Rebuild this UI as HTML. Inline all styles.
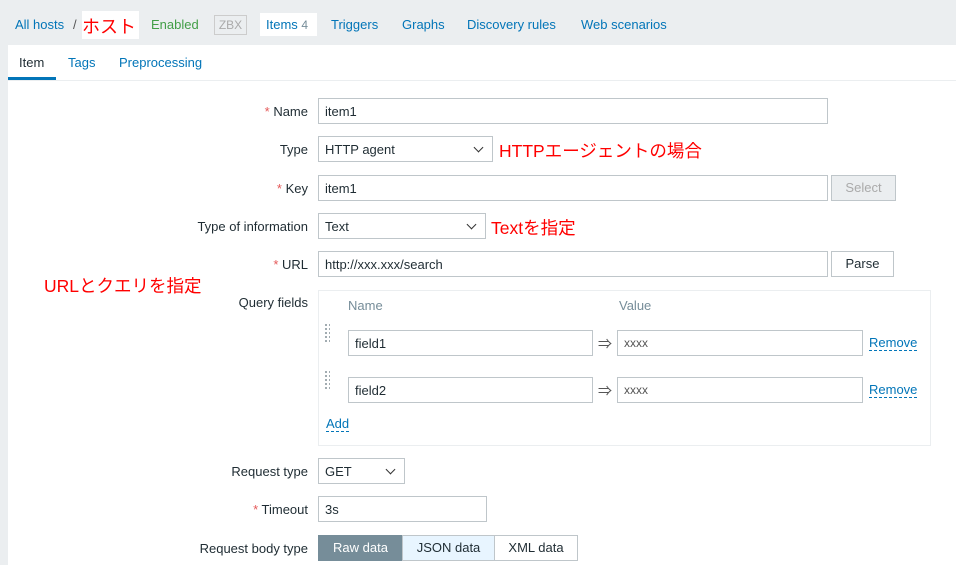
<!DOCTYPE html>
<html><head><meta charset="utf-8"><style>
*{margin:0;padding:0;box-sizing:border-box}
body{width:956px;height:565px;overflow:hidden;background:#ebeef0;font-family:"Liberation Sans","Noto Sans CJK JP",sans-serif;font-size:13px;color:#1f2c33;position:relative}
.a{position:absolute;white-space:nowrap}
.lnk{color:#0275b8}
.panel{position:absolute;left:8px;top:45px;width:948px;height:520px;background:#fff}
.lbl{position:absolute;right:648px;text-align:right;white-space:nowrap}
.req{color:#e45959}
.in{position:absolute;height:26px;border:1px solid #bfc6ca;background:#fff;padding:0 6px;line-height:25px;white-space:nowrap}
.sel::after{content:"";position:absolute;right:10px;top:7px;width:6px;height:6px;border-right:1.5px solid #333;border-bottom:1.5px solid #333;transform:rotate(45deg)}
.btn{position:absolute;height:26px;border:1px solid #bfc6ca;background:#fff;text-align:center;line-height:24px}
.red{color:#ff0000;font-size:17.5px}
.dots{position:absolute;width:6px;height:20px;background-image:radial-gradient(circle,#9aa5ab 1px,transparent 1.2px);background-size:4px 4px}
.rm{color:#0275b8;border-bottom:1px dashed #0275b8;line-height:14px}
.arr{position:absolute;color:#555;font-size:14px}
</style></head><body>
<div class="a lnk" style="left:15px;top:17px">All hosts</div>
<div class="a" style="left:73px;top:17px;color:#555">/</div>
<div class="a" style="left:82px;top:11px;width:57px;height:28px;background:#fff"></div>
<div class="a red" style="left:82px;top:13px;font-size:18px">ホスト</div>
<div class="a" style="left:151px;top:17px;color:#429e47">Enabled</div>
<div class="a" style="left:214px;top:15px;width:33px;height:20px;border:1px solid #ccc;color:#aaa;font-size:12px;text-align:center;line-height:18px">ZBX</div>
<div class="a" style="left:260px;top:13px;width:57px;height:23px;background:#fff"></div>
<div class="a lnk" style="left:266px;top:17px">Items <span style="color:#768d99;font-size:12px">4</span></div>
<div class="a lnk" style="left:331px;top:17px">Triggers</div>
<div class="a lnk" style="left:402px;top:17px">Graphs</div>
<div class="a lnk" style="left:467px;top:17px">Discovery rules</div>
<div class="a lnk" style="left:581px;top:17px">Web scenarios</div>
<div class="panel"></div>
<div class="a" style="left:19px;top:55px">Item</div>
<div class="a lnk" style="left:68px;top:55px">Tags</div>
<div class="a lnk" style="left:119px;top:55px">Preprocessing</div>
<div class="a" style="left:8px;top:77px;width:48px;height:3px;background:#0275b8"></div>
<div class="a" style="left:8px;top:80px;width:948px;height:1px;background:#ebeef0"></div>

<div class="lbl" style="top:104px"><span class="req">* </span>Name</div>
<div class="in" style="left:318px;top:98px;width:510px">item1</div>
<div class="lbl" style="top:142px">Type</div>
<div class="in sel" style="left:318px;top:136px;width:175px">HTTP agent</div>
<div class="a red" style="left:499px;top:138px">HTTPエージェントの場合</div>
<div class="lbl" style="top:181px"><span class="req">* </span>Key</div>
<div class="in" style="left:318px;top:175px;width:510px">item1</div>
<div class="btn" style="left:831px;top:175px;width:65px;background:#ebeef0;color:#aaa">Select</div>
<div class="lbl" style="top:219px">Type of information</div>
<div class="in sel" style="left:318px;top:213px;width:168px">Text</div>
<div class="a red" style="left:491px;top:215px">Textを指定</div>
<div class="lbl" style="top:257px"><span class="req">* </span>URL</div>
<div class="in" style="left:318px;top:251px;width:510px">http://xxx.xxx/search</div>
<div class="btn" style="left:831px;top:251px;width:63px">Parse</div>
<div class="a red" style="left:44px;top:273px">URLとクエリを指定</div>
<div class="lbl" style="top:295px">Query fields</div>
<div class="a" style="left:318px;top:290px;width:613px;height:156px;border:1px solid #ebeef0"></div>
<div class="a" style="left:348px;top:298px;color:#768d99">Name</div>
<div class="a" style="left:619px;top:298px;color:#768d99">Value</div>
<div class="dots" style="left:324px;top:323px"></div>
<div class="in" style="left:348px;top:330px;width:245px">field1</div>
<div class="arr" style="left:598px;top:334px">⇒</div>
<div class="in" style="left:617px;top:330px;width:246px;color:#555;font-size:12px">xxxx</div>
<div class="a rm" style="left:869px;top:336px">Remove</div>
<div class="dots" style="left:324px;top:370px"></div>
<div class="in" style="left:348px;top:377px;width:245px">field2</div>
<div class="arr" style="left:598px;top:381px">⇒</div>
<div class="in" style="left:617px;top:377px;width:246px;color:#555;font-size:12px">xxxx</div>
<div class="a rm" style="left:869px;top:383px">Remove</div>
<div class="a rm" style="left:326px;top:417px">Add</div>
<div class="lbl" style="top:464px">Request type</div>
<div class="in sel" style="left:318px;top:458px;width:87px">GET</div>
<div class="lbl" style="top:502px"><span class="req">* </span>Timeout</div>
<div class="in" style="left:318px;top:496px;width:169px">3s</div>
<div class="lbl" style="top:541px">Request body type</div>
<div class="btn" style="left:318px;top:535px;width:85px;background:#768d99;border-color:#768d99;color:#fff">Raw data</div>
<div class="btn" style="left:402px;top:535px;width:93px;background:#e8f5ff">JSON data</div>
<div class="btn" style="left:494px;top:535px;width:84px">XML data</div>
</body></html>
